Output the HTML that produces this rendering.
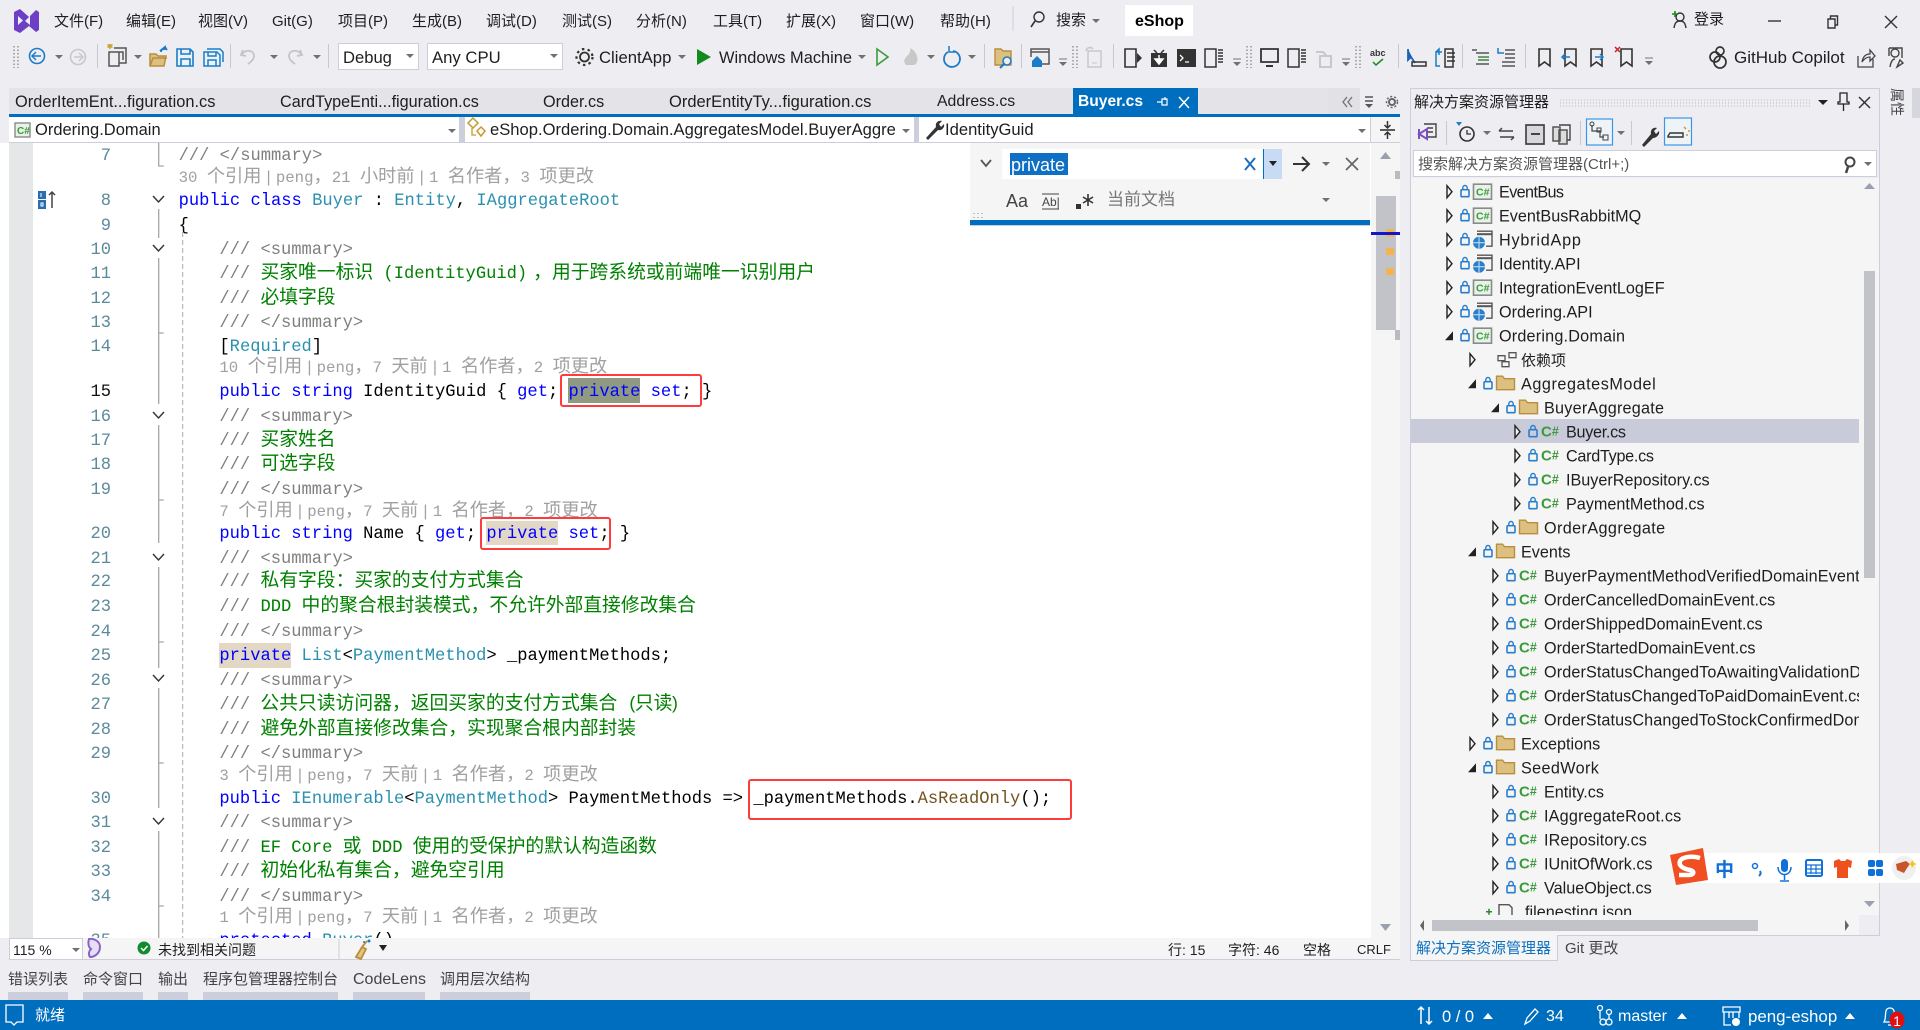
<!DOCTYPE html>
<html lang="zh"><head><meta charset="utf-8"><title>eShop</title>
<style>
html,body{margin:0;padding:0;width:1920px;height:1030px;overflow:hidden;background:#eeeef2}
body{position:relative;font-family:"Liberation Sans","Noto Sans CJK SC",sans-serif;color:#1e1e1e}
.a{position:absolute}
.t{position:absolute;white-space:pre;font-size:15px;line-height:20px;height:20px}
.b{position:absolute;background:#fff;border:1px solid #ccCedb;box-sizing:border-box}
#code{position:absolute;left:0;top:143px;width:1371px;height:795px;overflow:hidden;background:#fff}
.l{position:absolute;left:219.4px;height:24px;margin-top:2.5px;white-space:pre;font:17.12px/24px "Liberation Mono","Noto Sans CJK SC",monospace;color:#000}
.l0{left:178.6px}
.n{position:absolute;left:60px;width:51px;margin-top:2.5px;text-align:right;height:24px;font:17.12px/24px "Liberation Mono",monospace;color:#5b8a9c}
.l.c{color:#a0a0a0;font-size:15.7px;margin-top:.5px}
.c i{font-size:18.2px}
.c u{text-decoration:none;padding:0 2.5px}
i{font-style:normal;font-family:"Noto Sans CJK SC",sans-serif;font-size:18.8px;line-height:0}
.k{color:#0000ff}.y{color:#2b91af}.g{color:#008000}.d{color:#808080}.m{color:#74531f}
.h{position:absolute;background:#e3d8c6}
.rb{position:absolute;border:2.5px solid #ff3b3b;border-radius:3px;box-sizing:border-box;z-index:5}
svg text{font-family:"Liberation Sans","Noto Sans CJK SC",sans-serif}
.w{color:#fff}
</style></head><body>

<!-- title menu -->
<span class="t" style="left:54px;top:12px">文件(F)</span>
<span class="t" style="left:126px;top:12px">编辑(E)</span>
<span class="t" style="left:198px;top:12px">视图(V)</span>
<span class="t" style="left:272px;top:12px">Git(G)</span>
<span class="t" style="left:338px;top:12px">项目(P)</span>
<span class="t" style="left:412px;top:12px">生成(B)</span>
<span class="t" style="left:486px;top:12px">调试(D)</span>
<span class="t" style="left:562px;top:12px">测试(S)</span>
<span class="t" style="left:636px;top:12px">分析(N)</span>
<span class="t" style="left:713px;top:12px">工具(T)</span>
<span class="t" style="left:786px;top:12px">扩展(X)</span>
<span class="t" style="left:860px;top:12px">窗口(W)</span>
<span class="t" style="left:940px;top:12px">帮助(H)</span>
<span class="t" style="left:1056px;top:11px">搜索</span>
<div class="a" style="left:1125px;top:5px;width:68px;height:31px;background:#fff"></div>
<span class="t" style="left:1135px;top:12px;font-weight:bold;font-size:16px;color:#000">eShop</span>
<span class="t" style="left:1694px;top:10px">登录</span>

<!-- toolbar combos -->
<div class="b" style="left:338px;top:43px;width:81px;height:27px"></div>
<span class="t" style="left:343px;top:48px;font-size:16.6px">Debug</span>
<div class="b" style="left:427px;top:43px;width:136px;height:27px"></div>
<span class="t" style="left:432px;top:48px;font-size:16.7px">Any CPU</span>
<span class="t" style="left:599px;top:48px;font-size:16.7px">ClientApp</span>
<span class="t" style="left:719px;top:48px;font-size:16.4px">Windows Machine</span>
<span class="t" style="left:1734px;top:48px;font-size:17px">GitHub Copilot</span>

<!-- tabs -->
<div class="a" style="left:9px;top:88px;width:1319px;height:26px;background:#e4e4e8"></div>
<div class="a" style="left:1328px;top:88px;width:32px;height:26px;background:#e1e1e6"></div>
<span class="t" style="left:15px;top:92px;font-size:16.4px">OrderItemEnt...figuration.cs</span>
<span class="t" style="left:280px;top:92px;font-size:16.2px">CardTypeEnti...figuration.cs</span>
<span class="t" style="left:543px;top:92px;font-size:16.2px">Order.cs</span>
<span class="t" style="left:669px;top:92px;font-size:16.5px">OrderEntityTy...figuration.cs</span>
<span class="t" style="left:937px;top:92px;font-size:15.8px">Address.cs</span>
<div class="a" style="left:1073px;top:88px;width:124.6px;height:26px;background:#006ebe"></div>
<span class="t" style="left:1078px;top:92px;font-size:15.6px;font-weight:bold;color:#fff">Buyer.cs</span>
<div class="a" style="left:9px;top:114px;width:1391px;height:2.5px;background:#006ebe"></div>

<!-- nav bar -->
<div class="a" style="left:9px;top:116.5px;width:1391px;height:26.5px;background:#ccCedb"></div>
<div class="a" style="left:9px;top:117px;width:450px;height:25px;background:#fff"></div>
<div class="a" style="left:465px;top:117px;width:449px;height:25px;background:#fff"></div>
<div class="a" style="left:918.5px;top:117px;width:451px;height:25px;background:#fff"></div>
<div class="a" style="left:1371px;top:117px;width:29px;height:25px;background:#f5f5f5"></div>
<span class="t" style="left:35px;top:120px;font-size:16.5px">Ordering.Domain</span>
<span class="t" style="left:490px;top:120px;font-size:16.6px">eShop.Ordering.Domain.AggregatesModel.BuyerAggre</span>
<span class="t" style="left:945px;top:120px;font-size:16.6px">IdentityGuid</span>

<!-- editor -->
<div class="a" style="left:9px;top:143px;width:24px;height:795px;background:#e6e7e8;z-index:2"></div>
<div id="code">
<div class="h" style="left:568px;top:235px;width:72px;height:25px;background:#8f9a80"></div>
<div class="h" style="left:486px;top:377.7px;width:72px;height:24.3px"></div>
<div class="h" style="left:219px;top:500px;width:72px;height:24.6px"></div>

<div class="n" style="top:-1px">7</div><div class="l l0 d" style="top:-1px">/// &lt;/summary&gt;</div>
<div class="l l0 c" style="top:22px">30 <i>个引用</i><u>|</u>peng<i>，</i>21 <i>小时前</i><u>|</u>1 <i>名作者，</i>3 <i>项更改</i></div>
<div class="n" style="top:44.3px">8</div><div class="l l0" style="top:44.3px"><span class="k">public class</span> <span class="y">Buyer</span> : <span class="y">Entity</span>, <span class="y">IAggregateRoot</span></div>
<div class="n" style="top:69px">9</div><div class="l l0" style="top:69px">{</div>
<div class="n" style="top:93px">10</div><div class="l d" style="top:93px">/// &lt;summary&gt;</div>
<div class="n" style="top:117.3px">11</div><div class="l g" style="top:117.3px"><span class="d">/// </span><i>买家唯一标识</i> (IdentityGuid)<i style="margin-left:6px">，用于跨系统或前端唯一识别用户</i></div>
<div class="n" style="top:142px">12</div><div class="l g" style="top:142px"><span class="d">/// </span><i>必填字段</i></div>
<div class="n" style="top:166px">13</div><div class="l d" style="top:166px">/// &lt;/summary&gt;</div>
<div class="n" style="top:190.3px">14</div><div class="l" style="top:190.3px">[<span class="y">Required</span>]</div>
<div class="l c" style="top:212.5px">10 <i>个引用</i><u>|</u>peng<i>，</i>7 <i>天前</i><u>|</u>1 <i>名作者，</i>2 <i>项更改</i></div>
<div class="n" style="top:235px;color:#111">15</div><div class="l" style="top:235px"><span class="k">public string</span> IdentityGuid { <span class="k">get</span>; <span class="k">private set</span>; }</div>
<div class="n" style="top:260px">16</div><div class="l d" style="top:260px">/// &lt;summary&gt;</div>
<div class="n" style="top:284px">17</div><div class="l g" style="top:284px"><span class="d">/// </span><i>买家姓名</i></div>
<div class="n" style="top:308px">18</div><div class="l g" style="top:308px"><span class="d">/// </span><i>可选字段</i></div>
<div class="n" style="top:333px">19</div><div class="l d" style="top:333px">/// &lt;/summary&gt;</div>
<div class="l c" style="top:356px">7 <i>个引用</i><u>|</u>peng<i>，</i>7 <i>天前</i><u>|</u>1 <i>名作者，</i>2 <i>项更改</i></div>
<div class="n" style="top:377.3px">20</div><div class="l" style="top:377.3px"><span class="k">public string</span> Name { <span class="k">get</span>; <span class="k">private set</span>; }</div>
<div class="n" style="top:402px">21</div><div class="l d" style="top:402px">/// &lt;summary&gt;</div>
<div class="n" style="top:425.7px">22</div><div class="l g" style="top:425.7px"><span class="d">/// </span><i>私有字段：买家的支付方式集合</i></div>
<div class="n" style="top:450px">23</div><div class="l g" style="top:450px"><span class="d">/// </span>DDD <i>中的聚合根封装模式，不允许外部直接修改集合</i></div>
<div class="n" style="top:475.7px">24</div><div class="l d" style="top:475.7px">/// &lt;/summary&gt;</div>
<div class="n" style="top:499.3px">25</div><div class="l" style="top:499.3px"><span class="k">private</span> <span class="y">List</span>&lt;<span class="y">PaymentMethod</span>&gt; _paymentMethods;</div>
<div class="n" style="top:524.3px">26</div><div class="l d" style="top:524.3px">/// &lt;summary&gt;</div>
<div class="n" style="top:548.3px">27</div><div class="l g" style="top:548.3px"><span class="d">/// </span><i>公共只读访问器，返回买家的支付方式集合</i> (<i style="margin-left:-3px">只读</i><span style="margin-left:-3px">)</span></div>
<div class="n" style="top:573px">28</div><div class="l g" style="top:573px"><span class="d">/// </span><i>避免外部直接修改集合，实现聚合根内部封装</i></div>
<div class="n" style="top:597px">29</div><div class="l d" style="top:597px">/// &lt;/summary&gt;</div>
<div class="l c" style="top:620px">3 <i>个引用</i><u>|</u>peng<i>，</i>7 <i>天前</i><u>|</u>1 <i>名作者，</i>2 <i>项更改</i></div>
<div class="n" style="top:642px">30</div><div class="l" style="top:642px"><span class="k">public</span> <span class="y">IEnumerable</span>&lt;<span class="y">PaymentMethod</span>&gt; PaymentMethods =&gt; _paymentMethods.<span class="m">AsReadOnly</span>();</div>
<div class="n" style="top:666px">31</div><div class="l d" style="top:666px">/// &lt;summary&gt;</div>
<div class="n" style="top:691px">32</div><div class="l g" style="top:691px"><span class="d">/// </span>EF Core <i>或</i> DDD <i>使用的受保护的默认构造函数</i></div>
<div class="n" style="top:715px">33</div><div class="l g" style="top:715px"><span class="d">/// </span><i>初始化私有集合，避免空引用</i></div>
<div class="n" style="top:740px">34</div><div class="l d" style="top:740px">/// &lt;/summary&gt;</div>
<div class="l c" style="top:762px">1 <i>个引用</i><u>|</u>peng<i>，</i>7 <i>天前</i><u>|</u>1 <i>名作者，</i>2 <i>项更改</i></div>
<div class="n" style="top:784px">35</div><div class="l" style="top:784px"><span class="k">protected</span> <span class="y">Buyer</span>()</div>
</div>
<div class="rb" style="left:560px;top:374px;width:142px;height:33px"></div>
<div class="rb" style="left:479.5px;top:516.5px;width:131px;height:33px"></div>
<div class="rb" style="left:748px;top:779px;width:324px;height:41px"></div>

<!-- editor scrollbar -->
<div class="a" style="left:1371px;top:143px;width:29px;height:795px;background:#f5f5f5"></div>
<div class="a" style="left:1376px;top:196px;width:20px;height:134px;background:#c2c3c9"></div>
<div class="a" style="left:1395px;top:171px;width:5px;height:8px;background:#bbb"></div>
<div class="a" style="left:1395px;top:330px;width:5px;height:10px;background:#bbb"></div>
<div class="a" style="left:1386px;top:229px;width:8px;height:8px;background:#f4b350"></div>
<div class="a" style="left:1386px;top:248px;width:8px;height:7px;background:#f4b350"></div>
<div class="a" style="left:1386px;top:268px;width:8px;height:7px;background:#f4b350"></div>
<div class="a" style="left:1371px;top:232px;width:29px;height:2.5px;background:#1515c8"></div>

<!-- find widget -->
<div class="a" style="left:970px;top:143px;width:400px;height:83px;background:#f5f5f5;border-bottom:1px solid #ccCedb;box-sizing:border-box"></div>
<div class="a" style="left:970px;top:220px;width:400px;height:5px;background:#006ebe"></div>
<div class="a" style="left:1002px;top:149px;width:261px;height:30px;background:#fff"></div>
<div class="a" style="left:1263px;top:149px;width:19px;height:30px;background:#c7dcf4;border-left:1px solid #006ebe;box-sizing:border-box"></div>
<div class="a" style="left:1010px;top:153px;width:58px;height:22px;background:#0e6fc4"></div>
<span class="t" style="left:1011px;top:155px;font-size:18px;color:#fff">private</span>
<span class="t" style="left:1107px;top:190px;color:#777;font-size:17px">当前文档</span>
<span class="t" style="left:1006px;top:191px;font-size:18px;color:#444">Aa</span>

<!-- solution explorer -->
<div class="a" style="left:1410px;top:88px;width:470px;height:848px;border:1px solid #ccCedb;box-sizing:border-box;background:#eeeef2"></div>
<div class="a" style="left:1411px;top:178px;width:468px;height:757px;background:#f5f5f5"></div>
<span class="t" style="left:1414px;top:93px">解决方案资源管理器</span>
<div class="b" style="left:1413px;top:150px;width:464px;height:27px"></div>
<span class="t" style="left:1418px;top:155px;color:#555">搜索解决方案资源管理器(Ctrl+;)</span>
<div class="a" style="left:1411px;top:419px;width:448px;height:24px;background:#c9cbdb"></div>
<div class="a" style="left:1864px;top:271px;width:11px;height:307px;background:#c2c3c9"></div>
<div class="a" style="left:1411px;top:916px;width:468px;height:19px;background:#f5f5f5"></div>
<div class="a" style="left:1431.5px;top:920px;width:326.5px;height:11px;background:#c2c3c9"></div>
<div class="a" style="left:1859px;top:915px;width:20px;height:20px;background:#eeeef2"></div>
<div class="a" style="left:1410px;top:935px;width:148px;height:26px;background:#f5f5f5;border:1px solid #ccCedb;border-top:0;box-sizing:border-box"></div>
<span class="t" style="left:1416px;top:939px;color:#0e70c0">解决方案资源管理器</span>
<span class="t" style="left:1565px;top:939px;color:#444">Git 更改</span>
<span class="t" style="left:1889px;top:88px;width:16px;height:30px;writing-mode:vertical-rl;text-orientation:sideways;font-size:14px;line-height:16px;color:#444">属性</span>
<div class="a" style="left:1912px;top:88px;width:8px;height:30px;background:#d5d6de"></div>

<!-- Editor status -->
<div class="a" style="left:9px;top:938px;width:1391px;height:22px;background:#f5f5f5;border-bottom:1px solid #ccCedb;box-sizing:border-box"></div>
<div class="a" style="left:9px;top:938px;width:74px;height:22px;background:#fff;border:1px solid #ccCedb;box-sizing:border-box"></div>
<span class="t" style="left:13px;top:940px;font-size:14px">115 %</span>
<span class="t" style="left:158px;top:940px;font-size:14px">未找到相关问题</span>
<span class="t" style="left:1168px;top:940px;font-size:14px">行: 15</span>
<span class="t" style="left:1228px;top:940px;font-size:14px">字符: 46</span>
<span class="t" style="left:1303px;top:940px;font-size:14px">空格</span>
<span class="t" style="left:1357px;top:940px;font-size:13px">CRLF</span>

<!-- Bottom tool tabs -->
<span class="t" style="left:8px;top:970px;color:#444">错误列表</span>
<span class="t" style="left:83px;top:970px;color:#444">命令窗口</span>
<span class="t" style="left:158px;top:970px;color:#444">输出</span>
<span class="t" style="left:203px;top:970px;color:#444">程序包管理器控制台</span>
<span class="t" style="left:353px;top:970px;color:#444;font-size:16px">CodeLens</span>
<span class="t" style="left:440px;top:970px;color:#444">调用层次结构</span>
<div class="a" style="left:8px;top:992px;width:60px;height:8px;background:#ccCedb"></div>
<div class="a" style="left:83px;top:992px;width:60px;height:8px;background:#ccCedb"></div>
<div class="a" style="left:158px;top:992px;width:30px;height:8px;background:#ccCedb"></div>
<div class="a" style="left:203px;top:992px;width:135px;height:8px;background:#ccCedb"></div>
<div class="a" style="left:353px;top:992px;width:72px;height:8px;background:#ccCedb"></div>
<div class="a" style="left:440px;top:992px;width:90px;height:8px;background:#ccCedb"></div>

<!-- Status bar -->
<div class="a" style="left:0;top:1000px;width:1920px;height:30px;background:#006ebe"></div>
<span class="t w" style="left:35px;top:1006px">就绪</span>
<span class="t w" style="left:1442px;top:1007px;font-size:16.5px">0 / 0</span>
<span class="t w" style="left:1546px;top:1007px;font-size:16px">34</span>
<span class="t w" style="left:1618px;top:1007px;font-size:16px">master</span>
<span class="t w" style="left:1748px;top:1007px;font-size:16.9px">peng-eshop</span>

<!-- icon overlay -->
<svg class="a" style="left:0;top:0;z-index:6" width="1920" height="1030" viewBox="0 0 1920 1030" fill="none">
<defs>
<g id="cr"><path d="M0 0l8 0-4 4z" fill="#707070"/></g>
<g id="lk"><rect x="-4" y="-2" width="8" height="7" rx="1" stroke="#2a7fcb" stroke-width="1.600" fill="none"/><path d="M-2.200-2v-2a2.200 2.200 0 0 1 4.400 0v2" stroke="#2a7fcb" stroke-width="1.400" fill="none"/></g>
<g id="arc"><path d="M-2-6l5 6-5 6z" stroke="#222" stroke-width="1.400" fill="#f5f5f5"/></g>
<g id="aro"><path d="M4-4.500v9h-8z" fill="#222"/></g>
<g id="prj"><rect x="24.500" y="-7.500" width="18" height="15" fill="#e8f2e8" stroke="#8a8a8a" stroke-width="1.600"/><text x="27" y="4" font-size="10.500" font-weight="bold" fill="#3b9a3b" style="font-size:10.500px">C#</text></g>
<g id="web"><path d="M28-8.500h15v15h-6" stroke="#555" stroke-width="1.400" fill="none"/><path d="M28-5.500h15" stroke="#555" stroke-width="2" fill="none"/><circle cx="30" cy="3" r="6" fill="#2a7fcb"/><path d="M24 3h12M30-3v12" stroke="#cfe5f7" fill="none"/></g>
<g id="fld"><path d="M24.500-7.500h6l2 2.500h10v11h-18z" fill="#dcc07f" stroke="#b88e3e" stroke-width="1.400"/></g>
<g id="csf"><text x="24" y="5" font-weight="bold" fill="#3b9a3b" style="font-size:15px">C<tspan style="font-size:12.500px" dy="-1">#</tspan></text></g>
<g id="grip"><path d="M0 0v22M4 0v22" stroke="#aaa" stroke-width="2" stroke-dasharray="1.500 2"/></g>
<g id="bm"><path d="M0-8h11v17l-5.500-4-5.500 4z" stroke="#333" stroke-width="1.600"/></g>
</defs>

<!-- VS logo -->
<path d="M15 15l6-3 9 8 7-7 3 2v18l-3 2-7-6-9 7-6-3z M19 19v9l5-4.500z M31 19l-5 5 5 4z" transform="translate(-1,-3)" fill="#6c3fc4" fill-rule="evenodd"/>

<!-- title right -->
<circle cx="1039" cy="17" r="5" stroke="#333" stroke-width="1.400"/><path d="M1035 21l-4 6" stroke="#333" stroke-width="1.600"/>
<use href="#cr" x="1092" y="19"/>
<path d="M1013 6v25" stroke="#ccCedb"/>
<circle cx="1680" cy="17" r="4" stroke="#333" stroke-width="1.400"/><path d="M1674 28c1-6 3-7 6-7s5 1 6 7" stroke="#333" stroke-width="1.400"/><path d="M1672 14h6M1675 11v6" stroke="#1a8a1a" stroke-width="1.600"/>
<path d="M1768 21h13" stroke="#333" stroke-width="1.400"/>
<path d="M1828 19h7v9h-7zM1830.500 19v-3h7v9h-2" stroke="#333" stroke-width="1.400"/>
<path d="M1885 16l12 12M1897 16l-12 12" stroke="#333" stroke-width="1.400"/>

<!-- toolbar -->
<use href="#grip" x="14" y="46"/>
<circle cx="37" cy="56" r="7.500" stroke="#1c7cc8" stroke-width="1.600"/><path d="M41 56h-8M36 52l-4 4 4 4" stroke="#1c7cc8" stroke-width="1.500"/>
<use href="#cr" x="55" y="55"/>
<circle cx="78" cy="57" r="7.500" stroke="#c8c8c8" stroke-width="1.600"/><path d="M74 57h8M79 53l4 4-4 4" stroke="#c8c8c8" stroke-width="1.500"/>
<path d="M97.500 44v24M230.500 44v24M328.500 44v24" stroke="#c8c9d0"/>
<path d="M109 52h10v14h-10zM114 48h12v15h-7M116 52h7v8" stroke="#555" stroke-width="1.500"/><path d="M111 46l-3 0M110 44v5M107.500 44.500l5 3M112.500 44.500l-5 3" stroke="#c9a032" stroke-width="1.400"/>
<use href="#cr" x="134" y="55"/>
<path d="M150 66v-12h6l2 2h8l-2 10h-14zM150 66l3-8h14" stroke="#b88e3e" stroke-width="1.500" fill="#dcc07f"/><path d="M160 51l5-4v2c-3 0-4 1-4 3M165 47l2 3" stroke="#1c7cc8" stroke-width="1.800"/>
<path d="M177 49h13l3 3v14h-16zM181 49v5h9v-5M181 66v-7h9v7" stroke="#1c7cc8" stroke-width="1.600" fill="#eaf2fa"/>
<path d="M204 52h13l3 3v11h-16zM208 52v4h8v-4M208 66v-6h8v6M207 49h13l3 3v10" stroke="#1c7cc8" stroke-width="1.500" fill="#eaf2fa"/>
<path d="M243 50l-2 5 5 1M242 54c4-5 12-4 12 2 0 3-3 6-6 8" stroke="#c4c4c4" stroke-width="1.800"/>
<use href="#cr" x="270" y="55"/>
<path d="M300 50l2 5-5 1M301 54c-4-5-12-4-12 2 0 3 3 6 6 8" stroke="#c4c4c4" stroke-width="1.800"/>
<use href="#cr" x="313" y="55"/>
<use href="#cr" x="406" y="54"/>
<use href="#cr" x="550" y="54"/>
<circle cx="584.500" cy="57" r="4.500" stroke="#333" stroke-width="1.800"/><circle cx="584.500" cy="57" r="8" stroke="#333" stroke-width="2.200" stroke-dasharray="2.500 3.300"/>
<use href="#cr" x="678" y="55"/>
<path d="M697 49l14 8-14 8z" fill="#128a1e"/>
<use href="#cr" x="858" y="55"/>
<path d="M877 49l11 8-11 8z" stroke="#3d9b3d" stroke-width="1.600"/>
<path d="M906 65c-4-5 0-8 3-11 1-2 2-4 1-6 5 2 9 9 7 14-1 2-2 3-4 3z" fill="#c8c8c8"/>
<use href="#cr" x="927" y="55"/>
<path d="M948 52a8 8 0 1 0 5-1" stroke="#1c7cc8" stroke-width="1.800"/><path d="M949 46v6h6" stroke="#1c7cc8" stroke-width="1.500"/>
<use href="#cr" x="968" y="55"/>
<path d="M984.500 44v24M1021.500 44v24M1113.500 44v24M1398.500 44v24M1462.500 44v24M1525.500 44v24" stroke="#c8c9d0"/>
<path d="M995 49h6l2 2h8v14h-16z" fill="#dcc07f" stroke="#b88e3e" stroke-width="1.400"/><circle cx="1007" cy="61" r="4" stroke="#1c7cc8" stroke-width="1.600" fill="#eee"/><path d="M1004 64l-4 4" stroke="#1c7cc8" stroke-width="2"/>
<path d="M1031 49h18v3h-18zM1031 49v8M1049 49v15h-8" stroke="#555" stroke-width="1.500"/><path d="M1032 61l5-5 5 5v6h-10z" fill="#1c7cc8"/>
<use href="#cr" x="1059" y="62"/><path d="M1059 59h8" stroke="#777"/>
<use href="#grip" x="1073" y="46"/>
<path d="M1088 51h13v16h-13z" stroke="#c8c8c8" stroke-width="1.500"/><path d="M1086 51a4 4 0 0 1 7-2" stroke="#c8c8c8" stroke-width="1.500"/><path d="M1092 63h5" stroke="#c8c8c8"/>
<path d="M1125 49h11v18h-11z" stroke="#333" stroke-width="1.600"/><path d="M1137 53l5 5-5 5z" fill="#333"/>
<path d="M1151 53h16v14h-16z" fill="#333"/><path d="M1154 50l3 3M1164 50l-3 3" stroke="#333" stroke-width="1.500"/><path d="M1159 55v7M1155 59l4 5 4-5z" stroke="#fff" stroke-width="1.500" fill="#fff"/>
<path d="M1177 49h19v18h-19z" fill="#333"/><path d="M1180 55l3 3-3 3M1185 62h4" stroke="#fff" stroke-width="1.300"/>
<path d="M1205 49h11v18h-11zM1218 50h5M1218 53h5M1218 56h5M1218 59h5M1218 62h5" stroke="#333" stroke-width="1.500"/>
<use href="#cr" x="1233" y="62"/><path d="M1233 59h8" stroke="#777"/>
<use href="#grip" x="1247" y="46"/>
<path d="M1261 49h17v13h-17z" stroke="#333" stroke-width="1.800"/><path d="M1266 66h7" stroke="#333" stroke-width="2"/>
<path d="M1288 49h11v18h-11zM1301 50h5M1301 53h5M1301 56h5M1301 59h5M1301 62h5" stroke="#333" stroke-width="1.500"/>
<path d="M1316 52h7l3 3M1320 56h11v11h-11z" stroke="#c4c4c4" stroke-width="1.800"/>
<use href="#cr" x="1342" y="62"/><path d="M1342 59h8" stroke="#777"/>
<use href="#grip" x="1356" y="46"/>
<text x="1370" y="56" font-size="9" font-weight="bold" fill="#333">abc</text><path d="M1373 62l3 3 7-6" stroke="#1a8a1a" stroke-width="1.500"/>
<path d="M1408 49v11l3-3 4 6" fill="#1c62b8" stroke="#1c62b8" stroke-width="1.800"/><path d="M1412 62h14v4h-14z" stroke="#333" stroke-width="1.500"/>
<path d="M1442 52h-6v14h4M1436 52l3-3 0 6" stroke="#1c7cc8" stroke-width="1.500"/><path d="M1445 49h8v18h-8zM1447 53h8M1447 57h8M1447 61h8" stroke="#333" stroke-width="1.500"/>
<path d="M1472 50h5M1476 53h13M1478 57h11M1478 60h11M1476 64h13" stroke="#555" stroke-width="1.500"/><path d="M1478 57h11M1478 60h11" stroke="#3a9a3a"/>
<path d="M1505 50h10M1505 54h10M1505 58h10M1502 62h13M1502 66h13" stroke="#555" stroke-width="1.500"/><path d="M1498 48v5h6" stroke="#1c7cc8" stroke-width="1.500"/>
<use href="#bm" x="1539" y="57"/>
<use href="#bm" x="1565" y="57"/><path d="M1562 57h8M1565 54l-3 3 3 3" stroke="#1c7cc8" stroke-width="1.500"/>
<use href="#bm" x="1591" y="57"/><path d="M1595 57h8M1600 54l3 3-3 3" stroke="#1c7cc8" stroke-width="1.500"/>
<use href="#bm" x="1621" y="57"/><path d="M1615 47l5 5M1620 47l-5 5" stroke="#cc2222" stroke-width="1.500"/>
<use href="#cr" x="1645" y="61"/><path d="M1645 58h8" stroke="#777"/>
<circle cx="1720" cy="51" r="4" stroke="#333" stroke-width="1.700"/><circle cx="1715" cy="57" r="5" stroke="#333" stroke-width="1.700"/><circle cx="1720" cy="62" r="6" stroke="#333" stroke-width="1.700"/>
<path d="M1858 56v11h15v-8M1862 62c1-6 4-8 8-8v-4l5 6-5 5v-4c-3 0-6 2-8 5z" stroke="#444" stroke-width="1.300"/>
<circle cx="1895" cy="53" r="4" stroke="#444" stroke-width="1.400"/><path d="M1889 48h13v10M1889 48v8M1890 67c1-6 3-8 5-8M1900 60l3 3-6 4z" stroke="#444" stroke-width="1.400"/>

<!-- tabs glyphs -->
<path d="M1347 97l-4 5 4 5M1352 97l-4 5 4 5" stroke="#777" stroke-width="1.400"/>
<path d="M1365 97h8M1365 101h8" stroke="#555" stroke-width="1.600"/><path d="M1365 104h8l-4 4z" fill="#555"/>
<circle cx="1392" cy="102" r="3" stroke="#666" stroke-width="2"/><circle cx="1392" cy="102" r="5.500" stroke="#666" stroke-width="1.500" stroke-dasharray="2 2"/>
<path d="M1157 102h5M1162 99v6h5v-6zM1165 97v3" stroke="#fff" stroke-width="1.200"/>
<path d="M1179 97l10 11M1189 97l-10 11" stroke="#fff" stroke-width="1.500"/>

<!-- nav icons -->
<rect x="15" y="123" width="15" height="14" fill="#e8f2e8" stroke="#8a8a8a" stroke-width="1.400"/><text x="17" y="134" font-size="10" font-weight="bold" fill="#3b9a3b">C#</text>
<use href="#cr" x="448" y="129"/>
<path d="M473 118l5 5-5 5-5-5zM481 127l4 4-4 5-4-5z" stroke="#c89a2e" stroke-width="1.500"/><path d="M472 128v7h4" stroke="#c89a2e" stroke-width="1.300"/>
<use href="#cr" x="902" y="129"/>
<path d="M926 138l10-11c-1-4 2-7 6-6l-3 3 2 3 3-3c1 4-3 7-6 6l-10 10z" fill="#333"/>
<use href="#cr" x="1358" y="129"/>
<path d="M1380 130h15" stroke="#333" stroke-width="1.600"/><path d="M1387.500 121v6M1384.500 125l3 3 3-3M1387.500 139v-6M1384.500 135l3-3 3 3" stroke="#333" stroke-width="1.500"/>

<!-- code gutter -->
<g stroke="#a5a5a5" stroke-width="1.300">
<path d="M158.700 143v23h5"/><path d="M158.700 209v29"/><path d="M158.700 258v75h5M158.700 333v71"/><path d="M158.700 425v75h5M158.700 500v43"/><path d="M158.700 567v75h5M158.700 642v26"/><path d="M158.700 688v75h5M158.700 763v45"/><path d="M158.700 831v75h5M158.700 906v32"/>
<path d="M182.600 232v706" stroke-dasharray="5 3" stroke="#bbb"/>
</g>
<g stroke="#333" stroke-width="1.400">
<path d="M153 196l5.500 6 5.500-6M153 245l5.500 6 5.500-6M153 412l5.500 6 5.500-6M153 554l5.500 6 5.500-6M153 675l5.500 6 5.500-6M153 818l5.500 6 5.500-6"/>
</g>
<rect x="38" y="191" width="8" height="8" fill="#2a6eb0"/><rect x="38" y="200" width="8" height="9" fill="#2a6eb0"/><path d="M41 193v4M41 203h2v3h-2z" stroke="#fff"/><path d="M52 208v-16M49 195l3-3 3 3" stroke="#444" stroke-width="1.500"/>

<!-- editor scrollbar arrows -->
<path d="M1380 159l5.500-7 5.500 7z" fill="#9ba0ad"/>
<path d="M1380 924l5.500 7 5.500-7z" fill="#9ba0ad"/>

<!-- find widget -->
<path d="M981 160l5 6 5-6" stroke="#555" stroke-width="1.800"/>
<path d="M1245 158l10 12M1255 158l-10 12" stroke="#1c6cc0" stroke-width="2"/>
<path d="M1269 161h8l-4 5z" fill="#222"/>
<path d="M1293 164h15M1302 157l7 7-7 7" stroke="#333" stroke-width="2"/>
<use href="#cr" x="1322" y="162"/>
<path d="M1346 158l12 12M1358 158l-12 12" stroke="#666" stroke-width="1.700"/>
<text x="1042" y="206" font-size="12" fill="#444">Ab|</text><path d="M1042 194h17M1042 209h17" stroke="#444"/>
<rect x="1076" y="204" width="5" height="5" fill="#333"/><path d="M1088 194v12M1083 197l10 6M1093 197l-10 6" stroke="#333" stroke-width="1.600"/>
<use href="#cr" x="1322" y="198"/>
<path d="M974 213v1M978 213v1M982 213v1M974 217v1M978 217v1M982 217v1" stroke="#888"/>

<!-- solution panel header -->
<path d="M1560 100h250M1560 103h250M1560 106h250" stroke="#b8b8c0" stroke-dasharray="1 2"/>
<path d="M1818 100h10l-5 5z" fill="#222"/>
<path d="M1840 93h7v9h2v2h-11v-2h2zM1843.500 104v7" stroke="#222" stroke-width="1.300"/>
<path d="M1859 97l11 11M1870 97l-11 11" stroke="#333" stroke-width="1.500"/>
<path d="M1424 124h12v13h-8M1427 128h6M1427 132h6" stroke="#444" stroke-width="1.400"/><path d="M1419 134l8 5v-10zM1419 129v10" stroke="#7c4dc4" stroke-width="2"/>
<path d="M1446.500 121v24" stroke="#c8c9d0"/>
<path d="M1456 122h6l-3 4z" fill="#1c7cc8"/><circle cx="1467" cy="134" r="7" stroke="#333" stroke-width="1.600"/><path d="M1467 130v4h4" stroke="#333" stroke-width="1.300"/>
<use href="#cr" x="1483" y="131"/>
<path d="M1499 131h14M1502 128l-3 3M1500 137h14M1511 140l3-3" stroke="#444" stroke-width="1.500"/>
<path d="M1526 125h18v19h-18z" fill="#d8d8dc" stroke="#444" stroke-width="1.700"/><path d="M1531 134h9" stroke="#333" stroke-width="1.800"/>
<path d="M1559 125h11v15h-3" stroke="#444" stroke-width="1.400"/><path d="M1559 130h8v14h-8zM1553 127h7v14h-7z" stroke="#555" stroke-width="1.500" fill="#ddd"/>
<path d="M1580.500 121v24" stroke="#c8c9d0"/>
<rect x="1586.500" y="119" width="26" height="26" stroke="#3a96e8" stroke-width="1.200" fill="#eef3f8"/>
<path d="M1592 125v6h8v6h4" stroke="#444" stroke-width="1.200"/><circle cx="1592" cy="124" r="2" stroke="#444"/><rect x="1597" y="128" width="4" height="4" stroke="#444"/><rect x="1603" y="135" width="5" height="5" stroke="#444"/>
<use href="#cr" x="1617" y="131"/>
<path d="M1631.500 121v24" stroke="#c8c9d0"/>
<path d="M1642 145l9-11c-1-4 2-7 6-6l-3 3 2 3 3-3c1 4-3 7-6 7l-9 9z" fill="#333"/>
<rect x="1664.500" y="118" width="27" height="27" stroke="#3a96e8" stroke-width="1.200" fill="#eef3f8"/>
<path d="M1668 136l2-3h13v4h-15z" stroke="#333" stroke-width="1.400"/><path d="M1684 127l2 2M1690 131h-2M1686 135h2" stroke="#c89a2e" stroke-width="1.500"/>
<circle cx="1850" cy="162" r="4.500" stroke="#444" stroke-width="2"/><path d="M1848 167l-2 6" stroke="#444" stroke-width="2.500"/>
<use href="#cr" x="1864" y="162"/>
<path d="M1864 189l5.500-6 5.500 6z" fill="#9ba0ad"/>
<path d="M1864 901l5.500 6 5.500-6z" fill="#9ba0ad"/>
<path d="M1424 920v11l-4-5.500zM1845 920v11l4-5.500z" fill="#666"/>

<!-- tree -->
<clipPath id="tc"><rect x="1411" y="178" width="448" height="737"/></clipPath>
<g clip-path="url(#tc)" fill="#1e1e1e" style="font-size:16.2px">
<g transform="translate(1449,191.700)"><use href="#arc"/><use href="#lk" x="16"/><use href="#prj"/><text x="50" y="6" textLength="65" lengthAdjust="spacing">EventBus</text></g>
<g transform="translate(1449,215.700)"><use href="#arc"/><use href="#lk" x="16"/><use href="#prj"/><text x="50" y="6">EventBusRabbitMQ</text></g>
<g transform="translate(1449,239.700)"><use href="#arc"/><use href="#lk" x="16"/><use href="#web"/><text x="50" y="6" textLength="81.900" lengthAdjust="spacing">HybridApp</text></g>
<g transform="translate(1449,263.700)"><use href="#arc"/><use href="#lk" x="16"/><use href="#web"/><text x="50" y="6">Identity.API</text></g>
<g transform="translate(1449,287.700)"><use href="#arc"/><use href="#lk" x="16"/><use href="#prj"/><text x="50" y="6">IntegrationEventLogEF</text></g>
<g transform="translate(1449,311.700)"><use href="#arc"/><use href="#lk" x="16"/><use href="#web"/><text x="50" y="6">Ordering.API</text></g>
<g transform="translate(1449,335.700)"><use href="#aro"/><use href="#lk" x="16"/><use href="#prj"/><text x="50" y="6" textLength="126" lengthAdjust="spacing">Ordering.Domain</text></g>
<g transform="translate(1472,359.700)"><use href="#arc"/><path d="M26-4h7v5h-7zM37-7h7v5h-7zM30 2h7v5h-7z" stroke="#555" stroke-width="1.300" fill="none"/><text x="49" y="6" style="font-size:15px">依赖项</text></g>
<g transform="translate(1472,383.700)"><use href="#aro"/><use href="#lk" x="16"/><use href="#fld"/><text x="49" y="6" textLength="134.700" lengthAdjust="spacing">AggregatesModel</text></g>
<g transform="translate(1495,407.700)"><use href="#aro"/><use href="#lk" x="16"/><use href="#fld"/><text x="49" y="6" textLength="120" lengthAdjust="spacing">BuyerAggregate</text></g>
<g transform="translate(1517,431.700)"><use href="#arc"/><use href="#lk" x="16"/><use href="#csf"/><text x="49" y="6" textLength="60" lengthAdjust="spacing">Buyer.cs</text></g>
<g transform="translate(1517,455.700)"><use href="#arc"/><use href="#lk" x="16"/><use href="#csf"/><text x="49" y="6" textLength="88" lengthAdjust="spacing">CardType.cs</text></g>
<g transform="translate(1517,479.700)"><use href="#arc"/><use href="#lk" x="16"/><use href="#csf"/><text x="49" y="6">IBuyerRepository.cs</text></g>
<g transform="translate(1517,503.700)"><use href="#arc"/><use href="#lk" x="16"/><use href="#csf"/><text x="49" y="6">PaymentMethod.cs</text></g>
<g transform="translate(1495,527.700)"><use href="#arc"/><use href="#lk" x="16"/><use href="#fld"/><text x="49" y="6" textLength="121.200" lengthAdjust="spacing">OrderAggregate</text></g>
<g transform="translate(1472,551.700)"><use href="#aro"/><use href="#lk" x="16"/><use href="#fld"/><text x="49" y="6">Events</text></g>
<g transform="translate(1495,575.700)"><use href="#arc"/><use href="#lk" x="16"/><use href="#csf"/><text x="49" y="6" letter-spacing=".12">BuyerPaymentMethodVerifiedDomainEvent.cs</text></g>
<g transform="translate(1495,599.700)"><use href="#arc"/><use href="#lk" x="16"/><use href="#csf"/><text x="49" y="6">OrderCancelledDomainEvent.cs</text></g>
<g transform="translate(1495,623.700)"><use href="#arc"/><use href="#lk" x="16"/><use href="#csf"/><text x="49" y="6">OrderShippedDomainEvent.cs</text></g>
<g transform="translate(1495,647.700)"><use href="#arc"/><use href="#lk" x="16"/><use href="#csf"/><text x="49" y="6">OrderStartedDomainEvent.cs</text></g>
<g transform="translate(1495,671.700)"><use href="#arc"/><use href="#lk" x="16"/><use href="#csf"/><text x="49" y="6" letter-spacing=".12">OrderStatusChangedToAwaitingValidationDomainEvent.cs</text></g>
<g transform="translate(1495,695.700)"><use href="#arc"/><use href="#lk" x="16"/><use href="#csf"/><text x="49" y="6">OrderStatusChangedToPaidDomainEvent.cs</text></g>
<g transform="translate(1495,719.700)"><use href="#arc"/><use href="#lk" x="16"/><use href="#csf"/><text x="49" y="6" letter-spacing=".1">OrderStatusChangedToStockConfirmedDomainEvent.cs</text></g>
<g transform="translate(1472,743.700)"><use href="#arc"/><use href="#lk" x="16"/><use href="#fld"/><text x="49" y="6">Exceptions</text></g>
<g transform="translate(1472,767.700)"><use href="#aro"/><use href="#lk" x="16"/><use href="#fld"/><text x="49" y="6" textLength="77.800" lengthAdjust="spacing">SeedWork</text></g>
<g transform="translate(1495,791.700)"><use href="#arc"/><use href="#lk" x="16"/><use href="#csf"/><text x="49" y="6">Entity.cs</text></g>
<g transform="translate(1495,815.700)"><use href="#arc"/><use href="#lk" x="16"/><use href="#csf"/><text x="49" y="6" textLength="137.200" lengthAdjust="spacing">IAggregateRoot.cs</text></g>
<g transform="translate(1495,839.700)"><use href="#arc"/><use href="#lk" x="16"/><use href="#csf"/><text x="49" y="6" textLength="102.900" lengthAdjust="spacing">IRepository.cs</text></g>
<g transform="translate(1495,863.700)"><use href="#arc"/><use href="#lk" x="16"/><use href="#csf"/><text x="49" y="6">IUnitOfWork.cs</text></g>
<g transform="translate(1495,887.700)"><use href="#arc"/><use href="#lk" x="16"/><use href="#csf"/><text x="49" y="6">ValueObject.cs</text></g>
<g transform="translate(1472,911.700)"><path d="M14 0h6M17-3v6" stroke="#2a8a2a" stroke-width="1.500" fill="none"/><path d="M27-7h10l3 3v12h-13z" stroke="#555" stroke-width="1.400" fill="none"/><text x="53" y="6">filenesting.json</text></g>
</g>

<!-- editor status icons -->
<path d="M89 939c6-1 11 3 11 8 0 6-5 10-10 10-2-3-1-6 1-8-3-2-3-7-2-10z" stroke="#8a63c9" stroke-width="2" fill="#e6def5"/>
<use href="#cr" x="72" y="948"/>
<circle cx="144" cy="948" r="6.500" fill="#128a2e"/><path d="M141 948l2.500 2.500 4-4.500" stroke="#fff" stroke-width="1.500"/>
<path d="M339 939v20" stroke="#ccCedb"/>
<path d="M356 957l6-10 4 2-5 10zM362 947l5-6" stroke="#b88e3e" stroke-width="1.800" fill="#e3c67a"/><circle cx="369" cy="941" r="1.500" fill="#1c7cc8"/><circle cx="364" cy="942" r="1" fill="#1c7cc8"/>
<path d="M379 945h8l-4 6z" fill="#222"/>

<!-- status bar icons -->
<path d="M6 1005h17v17h-6l-3 3-3-3h-5z" stroke="#fff" stroke-width="1.300"/>
<path d="M1421 1007v17M1418 1010l3-3 3 3M1429 1007v17M1426 1021l3 3 3-3" stroke="#fff" stroke-width="1.500"/>
<path d="M1483 1019l5-6 5 6z" fill="#fff"/>
<path d="M1525 1024l2-6 8-9 3 3-8 9z" stroke="#fff" stroke-width="1.300"/>
<circle cx="1600" cy="1008" r="2.500" stroke="#fff" stroke-width="1.300"/><circle cx="1609" cy="1012" r="2.500" stroke="#fff" stroke-width="1.300"/><circle cx="1603" cy="1022" r="3" stroke="#fff" stroke-width="1.300"/><circle cx="1609" cy="1022" r="3" stroke="#fff" stroke-width="1.300"/><path d="M1600 1011v8M1609 1015v4" stroke="#fff" stroke-width="1.300"/>
<path d="M1677 1019l5-6 5 6z" fill="#fff"/>
<path d="M1723 1007h17v5h-17zM1724 1012v13h7M1739 1012v6M1729 1012v6M1733 1012v6" stroke="#fff" stroke-width="1.300"/><circle cx="1736" cy="1022" r="4" fill="#fff"/>
<path d="M1845 1019l5-6 5 6z" fill="#fff"/>
<path d="M1884 1022c2-3 1-7 2-11 1-4 7-4 8 0 1 4 1 8 2 11zM1888 1025h4" stroke="#fff" stroke-width="1.300"/>
<ellipse cx="1897" cy="1020" rx="7.500" ry="8.500" fill="#e01010"/><text x="1897" y="1026" text-anchor="middle" font-size="14" fill="#fff">1</text>

<!-- Sogou bar -->
<rect x="1685" y="853" width="235" height="30" fill="#fff"/>
<path d="M1670 855l33-7 5 32-32 5z" fill="#f04e23"/>
<path d="M1700 858c-6-2-17-2-20 3-2 5 4 8 10 9 5 1 4 5-1 5h-10" stroke="#fff" stroke-width="4.500"/>
<text x="1715" y="876" font-size="19" font-weight="bold" fill="#0e70d8">中</text>
<circle cx="1755" cy="866" r="2.500" stroke="#0e70d8" stroke-width="1.500"/><path d="M1760 871c1 2 1 3-1 5" stroke="#0e70d8" stroke-width="2"/>
<rect x="1781" y="859" width="7" height="13" rx="3.500" fill="#0e70d8"/><path d="M1778 867c0 10 13 10 13 0M1784.500 875v5M1780 881h9" stroke="#0e70d8" stroke-width="1.500"/>
<rect x="1806" y="860" width="16" height="16" rx="1.500" stroke="#0e70d8" stroke-width="2"/><path d="M1806 865h16M1806 869h16M1806 873h16M1811 865v9M1816 865v9" stroke="#0e70d8" stroke-width="1.200"/>
<path d="M1834 861l5-2 2 2h4l2-2 5 2-1 7-3-1v11h-11v-11l-3 1z" fill="#f0501e"/>
<rect x="1868" y="860" width="7" height="7" rx="2" fill="#0e70d8"/><rect x="1876" y="860" width="7" height="7" rx="2" fill="#0e70d8"/><rect x="1868" y="869" width="7" height="7" rx="2" fill="#0e70d8"/><rect x="1876" y="869" width="7" height="7" rx="2" fill="#0e70d8"/>
<circle cx="1904" cy="868" r="12" fill="#f0f0f0"/><path d="M1896 864l10-3 4 3-3 4-3 5-7-3z" fill="#c8552a"/><path d="M1912 860l2 3 3 1-3 1-2 3-1-3-3-1 3-1z" fill="#f5c518"/>
</svg>
</body></html>
